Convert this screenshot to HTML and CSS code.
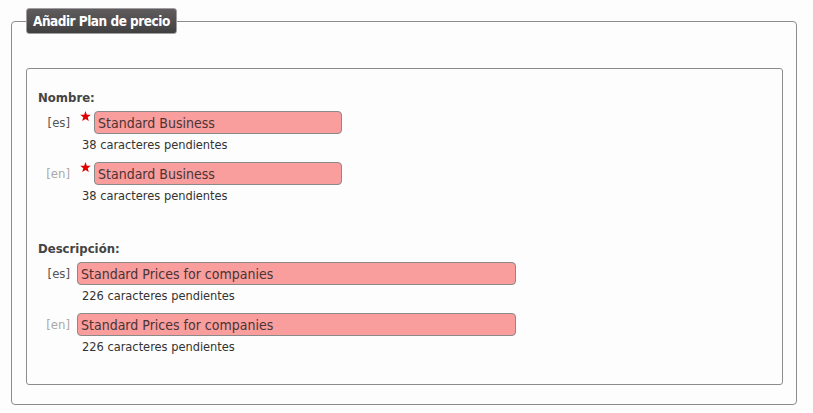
FILE: index.html
```html
<!DOCTYPE html>
<html lang="es">
<head>
<meta charset="utf-8">
<title>Añadir Plan de precio</title>
<link rel="stylesheet" href="styles.css">
</head>
<body>
<div class="page">
  <fieldset class="panel">
    <legend class="panel-title">Añadir Plan de precio</legend>
    <div class="box">
      <div class="group">
        <div class="group-title">Nombre:</div>
        <div class="lang-row">
          <span class="lang">[es]</span>
          <div class="field">
            <div class="input-line">
              <svg class="req" viewBox="0 0 10 10" width="11" height="11"><polygon points="5,0 6.2,3.4 9.8,3.5 7,5.7 8,9.2 5,7.2 2,9.2 3,5.7 0.2,3.5 3.8,3.4" fill="#e00000"/></svg>
              <input class="text-input short" type="text" value="Standard Business">
            </div>
            <div class="counter">38 caracteres pendientes</div>
          </div>
        </div>
        <div class="lang-row">
          <span class="lang muted">[en]</span>
          <div class="field">
            <div class="input-line">
              <svg class="req" viewBox="0 0 10 10" width="11" height="11"><polygon points="5,0 6.2,3.4 9.8,3.5 7,5.7 8,9.2 5,7.2 2,9.2 3,5.7 0.2,3.5 3.8,3.4" fill="#e00000"/></svg>
              <input class="text-input short" type="text" value="Standard Business">
            </div>
            <div class="counter">38 caracteres pendientes</div>
          </div>
        </div>
      </div>
      <div class="group">
        <div class="group-title">Descripción:</div>
        <div class="lang-row">
          <span class="lang">[es]</span>
          <div class="field">
            <div class="input-line">
              <input class="text-input long" type="text" value="Standard Prices for companies">
            </div>
            <div class="counter">226 caracteres pendientes</div>
          </div>
        </div>
        <div class="lang-row">
          <span class="lang muted">[en]</span>
          <div class="field">
            <div class="input-line">
              <input class="text-input long" type="text" value="Standard Prices for companies">
            </div>
            <div class="counter">226 caracteres pendientes</div>
          </div>
        </div>
      </div>
    </div>
  </fieldset>
</div>
</body>
</html>
```
FILE: styles.css
```css
html, body {
  margin: 0;
  padding: 0;
  background: #fcfdfc;
}
body {
  font-family: "DejaVu Sans Condensed", "DejaVu Sans", sans-serif;
  color: #333;
}
.page {
  padding: 8px 16px 0 11px;
}
.panel {
  margin: 0;
  border: 1px solid #8c8c8c;
  border-radius: 4px;
  padding: 34px 13px 19px 14px;
  min-width: 0;
}
.panel-title {
  background: linear-gradient(#5f5c5d, #414041);
  border: 1px solid #a19ca1;
  border-radius: 3px;
  color: #fff;
  font-weight: bold;
  font-size: 13.5px;
  letter-spacing: -0.5px;
  line-height: 24px;
  height: 24px;
  padding: 0 6px;
  box-sizing: content-box;
}
.box {
  border: 1px solid #8c8c8c;
  border-radius: 3px;
  padding: 21px 11px 29px;
}
.group + .group {
  margin-top: 37px;
}
.group-title {
  font-weight: bold;
  font-size: 13px;
  line-height: 16px;
  color: #444;
  margin-bottom: 5px;
}
.lang-row {
  display: flex;
  gap: 7px;
}
.lang-row + .lang-row {
  margin-top: 9px;
}
.lang {
  width: 32px;
  text-align: right;
  font-size: 13px;
  line-height: 23px;
  color: #555;
}
.lang.muted {
  color: #aaa;
}
.field {
  display: flex;
  flex-direction: column;
}
.input-line {
  display: flex;
  align-items: flex-start;
}
.req {
  margin: 0 3px 0 3px;
}
.text-input {
  height: 23px;
  box-sizing: border-box;
  border: 1px solid #8a8a8a;
  border-radius: 4px;
  background: #f99d9d;
  color: #4a3434;
  font-family: "DejaVu Sans Condensed", "DejaVu Sans", sans-serif;
  font-size: 14px;
  padding: 0 3px;
  margin: 0;
  outline: none;
}
.text-input.short {
  width: 248px;
}
.text-input.long {
  width: 439px;
}
.counter {
  font-size: 12.7px;
  line-height: 16px;
  padding-left: 5px;
  margin-top: 3px;
  color: #333;
}
```
